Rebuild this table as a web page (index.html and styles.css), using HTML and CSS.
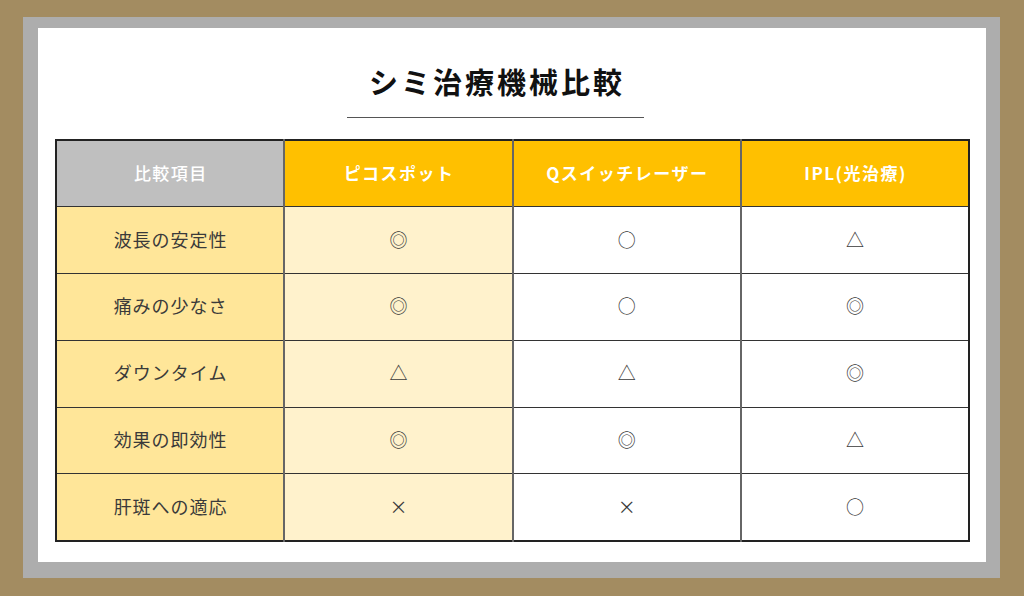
FILE: index.html
```html
<!DOCTYPE html>
<html lang="ja">
<head>
<meta charset="utf-8">
<link rel="stylesheet" href="styles.css">
</head>
<body>
<div class="frame">
  <div class="mat">
    <div class="sheet">
      <div class="title-wrap">
        <h1 class="title">シミ治療機械比較</h1>
      </div>
      <table class="cmp">
        <colgroup><col class="c1"><col class="c2"><col class="c3"><col class="c4"></colgroup>
        <thead>
          <tr>
            <th class="h-item">比較項目</th>
            <th class="h-main">ピコスポット</th>
            <th class="h-main">Qスイッチレーザー</th>
            <th class="h-main">IPL(光治療)</th>
          </tr>
        </thead>
        <tbody>
          <tr><td class="item">波長の安定性</td><td class="pico">◎</td><td>○</td><td>△</td></tr>
          <tr><td class="item">痛みの少なさ</td><td class="pico">◎</td><td>○</td><td>◎</td></tr>
          <tr><td class="item">ダウンタイム</td><td class="pico">△</td><td>△</td><td>◎</td></tr>
          <tr><td class="item">効果の即効性</td><td class="pico">◎</td><td>◎</td><td>△</td></tr>
          <tr><td class="item">肝斑への適応</td><td class="pico">×</td><td>×</td><td>○</td></tr>
        </tbody>
      </table>
    </div>
  </div>
</div>
</body>
</html>
```

FILE: styles.css
```css
* { box-sizing: border-box; }
html, body { margin: 0; padding: 0; }
body {
  width: 1024px;
  height: 596px;
  overflow: hidden;
  font-family: "Noto Sans CJK JP", "Noto Sans", sans-serif;
}
.frame {
  background: #a38c61;
  padding: 17px 24px 18px 23px;
  height: 596px;
}
.mat {
  background: #adadad;
  padding: 11px 14px 16px 15px;
  height: 561px;
}
.sheet {
  background: #ffffff;
  height: 534px;
  padding: 32px 16px 0 17px;
}
.title-wrap {
  width: 297px;
  margin-left: 292px;
  border-bottom: 1px solid #555;
  height: 58px;
}
.title {
  margin: 0;
  text-align: center;
  font-size: 29px;
  line-height: 42px;
  font-weight: 700;
  letter-spacing: 3px;
  text-indent: 3px;
  color: #111;
}
.cmp {
  margin-top: 21px;
  width: 915px;
  border-collapse: collapse;
  table-layout: fixed;
  border: 2px solid #222;
}
.cmp col { width: 25%; }
.cmp th, .cmp td {
  height: 66.8px;
  text-align: center;
  vertical-align: middle;
  padding: 0 0 3px;
  border: 1px solid #333;
}
.cmp td + td, .cmp th + th { border-left: 2px solid #666; }
.cmp th {
  color: #fff;
  font-size: 17px;
  font-weight: 700;
  letter-spacing: 1.5px;
  text-indent: 1.5px;
  padding-bottom: 2px;
}
.h-item { background: #bfbfbf; font-weight: 500 !important; }
.h-main { background: #ffc000; }
.cmp td {
  font-size: 18px;
  color: #3a3a3a;
  letter-spacing: 1px;
  text-indent: 1px;
  background: #fff;
}
.cmp td.item { background: #ffe699; }
.cmp td.pico { background: #fff2cc; }
```
